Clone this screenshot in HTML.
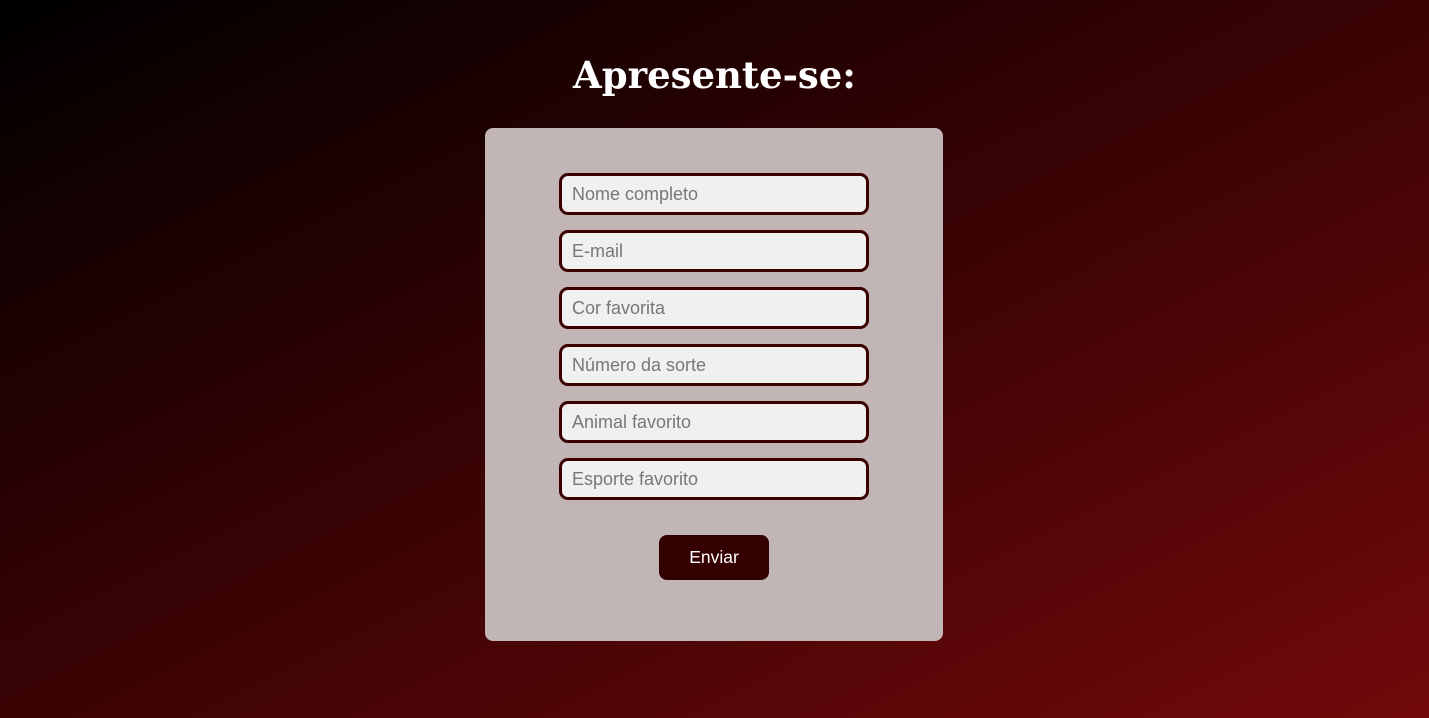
<!DOCTYPE html>
<html><head><meta charset="utf-8"><style>
html,body{margin:0;height:718px;overflow:hidden}
body{width:1429px;background:linear-gradient(to bottom right,#000 0%,#3a0304 50%,#72090a 100%);font-family:"Liberation Sans",sans-serif;position:relative}
h1{position:absolute;top:51px;left:0;width:1429px;text-align:center;margin:0;font-family:"DejaVu Serif","Liberation Serif",serif;font-weight:bold;font-size:37px;color:#fff;letter-spacing:0;line-height:48px}
.card{position:absolute;left:485px;top:128px;width:458px;height:513px;background:#c1b5b6;border-radius:8px}
.in{position:absolute;left:74px;height:36px;border:3px solid #3a0000;border-radius:9px;background:#f0f0f0;color:#777;font-size:18px;line-height:36px;padding-left:10px;width:294px}
.btn{position:absolute;left:174px;top:407px;width:110px;height:45px;background:#350000;border-radius:8px;color:#fff;font-size:17.5px;text-align:center;line-height:45px}
</style></head><body>
<h1>Apresente-se:</h1>
<div class="card">
<div class="in" style="top:45px">Nome completo</div>
<div class="in" style="top:102px">E-mail</div>
<div class="in" style="top:159px">Cor favorita</div>
<div class="in" style="top:216px">Número da sorte</div>
<div class="in" style="top:273px">Animal favorito</div>
<div class="in" style="top:330px">Esporte favorito</div>
<div class="btn">Enviar</div>
</div>
</body></html>
